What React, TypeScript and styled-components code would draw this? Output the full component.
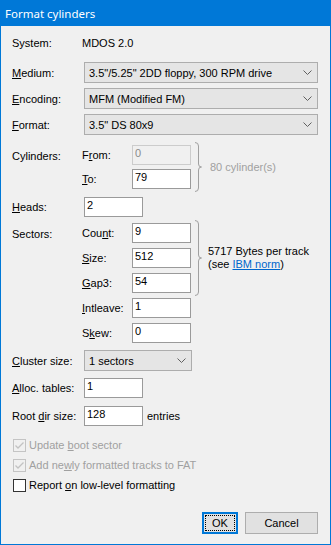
import React from 'react';
import styled, { createGlobalStyle } from 'styled-components';

const GlobalStyle = createGlobalStyle`
  html, body {
    margin: 0;
    padding: 0;
    background: #f0f0f0;
  }
  body {
    font-family: "Liberation Sans", Arial, sans-serif;
    font-size: 11px;
    color: #000;
  }
`;

const Chevron = () => (
  <svg width="9" height="5" viewBox="0 0 9 5">
    <path d="M0.5 0.5 L4.5 4.5 L8.5 0.5" fill="none" stroke="#606060" strokeWidth="1" />
  </svg>
);

// curly brace drawn to span a group of fields, overhangs by `over` px top and bottom
const Brace: React.FC<{ h: number; over: number }> = ({ h, over }) => {
  const m = h / 2;
  return (
    <BraceSvg width="7" height={h} viewBox={`0 0 7 ${h}`} $over={over}>
      <path
        d={`M0 0.5 Q3.5 0.5 3.5 4 V${m - 3} Q3.5 ${m} 6.5 ${m} Q3.5 ${m} 3.5 ${m + 3} V${h - 4} Q3.5 ${h - 0.5} 0 ${h - 0.5}`}
        fill="none"
        stroke="#a0a0a0"
        strokeWidth="1"
      />
    </BraceSvg>
  );
};

const CheckMark = ({ color }: { color: string }) => (
  <svg width="11" height="11" viewBox="0 0 11 11">
    <path d="M1.5 5.5 L4 8 L9.5 2.5" fill="none" stroke={color} strokeWidth="1.3" />
  </svg>
);

export default function App() {
  return (
    <>
      <GlobalStyle />
      <Window>
        <TitleBar>Format cylinders</TitleBar>
        <Body>
          <Row $mt={9} $h={16}>
            <Label>System:</Label>
            <span>MDOS 2.0</span>
          </Row>

          <Row $mt={11} $h={21}>
            <Label><u>M</u>edium:</Label>
            <Combo $w={235}>
              <span>3.5"/5.25" 2DD floppy, 300 RPM drive</span>
              <Chevron />
            </Combo>
          </Row>
          <Row $mt={5} $h={21}>
            <Label><u>E</u>ncoding:</Label>
            <Combo $w={235}>
              <span>MFM (Modified FM)</span>
              <Chevron />
            </Combo>
          </Row>
          <Row $mt={5} $h={21}>
            <Label><u>F</u>ormat:</Label>
            <Combo $w={235}>
              <span>3.5" DS 80x9</span>
              <Chevron />
            </Combo>
          </Row>

          <Group $mt={10}>
            <GroupLabel>Cylinders:</GroupLabel>
            <Braced>
              <Fields $gap={4}>
                <FieldRow>
                  <SubLabel>F<u>r</u>om:</SubLabel>
                  <Edit defaultValue="0" disabled />
                </FieldRow>
                <FieldRow>
                  <SubLabel><u>T</u>o:</SubLabel>
                  <Edit defaultValue="79" />
                </FieldRow>
              </Fields>
              <Brace h={50} over={3} />
              <Note $muted $ml={8}>80 cylinder(s)</Note>
            </Braced>
          </Group>

          <Row $mt={8} $h={20}>
            <Label><u>H</u>eads:</Label>
            <Edit defaultValue="2" $ml={2} />
          </Row>

          <Group $mt={6}>
            <GroupLabel>Sectors:</GroupLabel>
            <Fields $gap={5}>
              <Braced>
                <Fields $gap={5}>
                  <FieldRow>
                    <SubLabel>Cou<u>n</u>t:</SubLabel>
                    <Edit defaultValue="9" />
                  </FieldRow>
                  <FieldRow>
                    <SubLabel><u>S</u>ize:</SubLabel>
                    <Edit defaultValue="512" />
                  </FieldRow>
                  <FieldRow>
                    <SubLabel><u>G</u>ap3:</SubLabel>
                    <Edit defaultValue="54" />
                  </FieldRow>
                </Fields>
                <Brace h={76} over={3} />
                <Note $ml={6}>
                  5717 Bytes per track
                  <br />
                  (see <Link href="#">IBM norm</Link>)
                </Note>
              </Braced>
              <FieldRow>
                <SubLabel><u>I</u>ntleave:</SubLabel>
                <Edit defaultValue="1" />
              </FieldRow>
              <FieldRow>
                <SubLabel>S<u>k</u>ew:</SubLabel>
                <Edit defaultValue="0" />
              </FieldRow>
            </Fields>
          </Group>

          <Row $mt={7} $h={21}>
            <Label><u>C</u>luster size:</Label>
            <Combo $w={108}>
              <span>1 sectors</span>
              <Chevron />
            </Combo>
          </Row>
          <Row $mt={7} $h={20}>
            <Label><u>A</u>lloc. tables:</Label>
            <Edit defaultValue="1" $ml={2} />
          </Row>
          <Row $mt={8} $h={20}>
            <Label>Root <u>d</u>ir size:</Label>
            <Edit defaultValue="128" $ml={2} />
            <Suffix>entries</Suffix>
          </Row>

          <Checks>
            <CheckRow $disabled>
              <Box $disabled>
                <CheckMark color="#c2c2c2" />
              </Box>
              <span>Update <u>b</u>oot sector</span>
            </CheckRow>
            <CheckRow $disabled>
              <Box $disabled>
                <CheckMark color="#c2c2c2" />
              </Box>
              <span>Add ne<u>w</u>ly formatted tracks to FAT</span>
            </CheckRow>
            <CheckRow>
              <Box />
              <span>Report <u>o</u>n low-level formatting</span>
            </CheckRow>
          </Checks>

          <Buttons>
            <Button $default $w={36}>
              <Focus>OK</Focus>
            </Button>
            <Button $w={73}>Cancel</Button>
          </Buttons>
        </Body>
      </Window>
    </>
  );
}

// Styled components
const Window = styled.div`
  width: 331px;
  height: 545px;
  box-sizing: border-box;
  border: 1px solid #0078d7;
  border-top: none;
  background: #f0f0f0;
  display: flex;
  flex-direction: column;
`;

const TitleBar = styled.div`
  height: 26px;
  margin: 0 -1px;
  padding-left: 5px;
  background: #0078d7;
  color: #fff;
  font-family: "Noto Sans", "Liberation Sans", sans-serif;
  font-size: 11.5px;
  display: flex;
  align-items: center;
`;

const Body = styled.div`
  flex: 1;
  padding: 0 12px 0 11px;
  display: flex;
  flex-direction: column;
`;

const Row = styled.div<{ $mt: number; $h: number }>`
  display: flex;
  align-items: center;
  margin-top: ${(p) => p.$mt}px;
  height: ${(p) => p.$h}px;
`;

const Label = styled.span`
  width: 70px;
  flex: none;
  white-space: nowrap;
`;

const GroupLabel = styled(Label)`
  height: 20px;
  line-height: 22px;
`;

const SubLabel = styled.span`
  width: 50px;
  flex: none;
  white-space: nowrap;
`;

const Combo = styled.div<{ $w: number }>`
  width: ${(p) => p.$w}px;
  height: 21px;
  box-sizing: border-box;
  margin-left: 2px;
  padding: 0 5px 0 4px;
  border: 1px solid #adadad;
  background: #e5e5e5;
  display: flex;
  align-items: center;
  justify-content: space-between;
  white-space: nowrap;
`;

const Edit = styled.input<{ $ml?: number }>`
  width: 59px;
  height: 20px;
  box-sizing: border-box;
  margin: 0 0 0 ${(p) => p.$ml ?? 0}px;
  padding: 0 1px 5px 2px;
  border: 1px solid #9a9a9a;
  background: #fff;
  font-family: "Liberation Sans", Arial, sans-serif;
  font-size: 11px;
  color: #000;
  outline: none;

  &:disabled {
    background: #f0f0f0;
    border-color: #cccccc;
    color: #8a8a8a;
  }
`;

const Group = styled.div<{ $mt: number }>`
  display: flex;
  align-items: flex-start;
  margin-top: ${(p) => p.$mt}px;
`;

const Fields = styled.div<{ $gap: number }>`
  display: flex;
  flex-direction: column;
  gap: ${(p) => p.$gap}px;
`;

const FieldRow = styled.div`
  display: flex;
  align-items: center;
  height: 20px;
`;

const Braced = styled.div`
  display: flex;
  align-items: center;
`;

const BraceSvg = styled.svg<{ $over: number }>`
  flex: none;
  margin: -${(p) => p.$over}px 0 -${(p) => p.$over}px 4px;
`;

const Note = styled.div<{ $muted?: boolean; $ml: number }>`
  margin-left: ${(p) => p.$ml}px;
  color: ${(p) => (p.$muted ? '#a0a0a0' : '#000')};
  line-height: 13px;
  white-space: nowrap;
`;

const Link = styled.a`
  color: #0066cc;
  text-decoration: underline;
`;

const Suffix = styled.span`
  margin-left: 4px;
`;

const Checks = styled.div`
  display: flex;
  flex-direction: column;
  gap: 4px;
  margin-top: 11px;
`;

const CheckRow = styled.label<{ $disabled?: boolean }>`
  display: flex;
  align-items: center;
  gap: 3px;
  height: 16px;
  padding-left: 1px;
  color: ${(p) => (p.$disabled ? '#a0a0a0' : '#000')};
`;

const Box = styled.span<{ $disabled?: boolean }>`
  width: 13px;
  height: 13px;
  box-sizing: border-box;
  border: 1px solid ${(p) => (p.$disabled ? '#c4c4c4' : '#333')};
  background: ${(p) => (p.$disabled ? '#f0f0f0' : '#fff')};
  display: flex;
  align-items: center;
  justify-content: center;
`;

const Buttons = styled.div`
  display: flex;
  justify-content: flex-end;
  gap: 7px;
  margin-top: 19px;
`;

const Button = styled.div<{ $default?: boolean; $w: number }>`
  width: ${(p) => p.$w}px;
  height: 22px;
  box-sizing: border-box;
  border: ${(p) => (p.$default ? '2px solid #0078d7' : '1px solid #adadad')};
  background: #e1e1e1;
  display: flex;
  align-items: center;
  justify-content: center;
  padding: ${(p) => (p.$default ? '1px' : '0')};
`;

const Focus = styled.span`
  flex: 1;
  align-self: stretch;
  border: 1px dotted #000;
  display: flex;
  align-items: center;
  justify-content: center;
`;
